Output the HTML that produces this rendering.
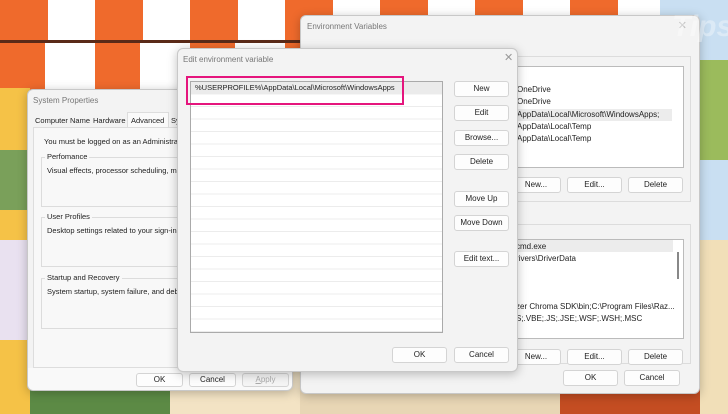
<!DOCTYPE html><html><head><style>
*{box-sizing:border-box;margin:0;padding:0}
body{width:728px;height:414px;overflow:hidden;position:relative;font-family:"Liberation Sans",sans-serif;font-size:8px;color:#222;background:#f2e4c8}
.a{position:absolute}
.win{position:absolute;background:#f3f3f3;border:1px solid #c8c8c8;border-radius:6px;box-shadow:0 2px 10px rgba(0,0,0,.25)}
.btn{position:absolute;background:#fdfdfd;border:1px solid #d4d4d4;border-radius:3px;text-align:center;font-size:8px;line-height:14px;color:#222}
.title{position:absolute;font-size:8px;color:#777}
.grp{position:absolute;border:1px solid #dcdcdc}
.gl{position:absolute;background:#f3f3f3;padding:0 2px;font-size:7.5px;top:-6px;left:3px}
</style></head><body>
<div class="a" style="left:0;top:0;width:728px;height:45px;background:repeating-linear-gradient(90deg,#ef6a2c 0 48px,#fff 48px 95px)"></div>
<div class="a" style="left:0;top:40px;width:728px;height:3px;background:#5a2a18"></div>
<div class="a" style="left:0;top:43px;width:330px;height:48px;background:repeating-linear-gradient(90deg,#ef6a2c 0 45px,#fff 45px 95px)"></div>
<div class="a" style="left:0;top:88px;width:30px;height:300px;background:#f5c247"></div>
<div class="a" style="left:0;top:150px;width:30px;height:60px;background:#7aa05a"></div>
<div class="a" style="left:0;top:240px;width:30px;height:100px;background:#e9e1f0"></div>
<div class="a" style="left:660px;top:0;width:68px;height:240px;background:#c9dff2"></div>
<div class="a" style="left:700px;top:60px;width:28px;height:100px;background:#9bbb5c"></div>
<div class="a" style="left:700px;top:240px;width:28px;height:174px;background:#f1dfb8"></div>
<div class="a" style="left:0;top:388px;width:728px;height:26px;background:linear-gradient(90deg,#f5c247 0 30px,#5c8a45 30px 170px,#f3e3c4 170px 300px,#e8d6b5 300px 560px,#c44d22 560px 700px,#f1dfb8 700px)"></div>
<!-- Environment Variables -->
<div class="win" style="left:300px;top:15px;width:400px;height:379px">
<div class="title" style="left:6px;top:6px">Environment Variables</div>
<div class="a" style="right:12px;top:3px;color:#bbb;font-size:11px">✕</div>
<div class="grp" style="left:205px;top:40px;width:185px;height:146px"></div>
<div class="a" style="left:212px;top:50px;width:171px;height:102px;background:#fff;border:1px solid #bbb"></div>
<div class="a" style="left:216px;top:68px;width:160px;line-height:12.3px;font-size:8px">OneDrive<br>OneDrive<br><span style="background:#ececec;display:block;width:155px">AppData\Local\Microsoft\WindowsApps;</span>AppData\Local\Temp<br>AppData\Local\Temp</div>
<div class="btn" style="left:210px;top:161px;width:50px;height:16px">New...</div>
<div class="btn" style="left:266px;top:161px;width:55px;height:16px">Edit...</div>
<div class="btn" style="left:327px;top:161px;width:55px;height:16px">Delete</div>
<div class="grp" style="left:205px;top:208px;width:185px;height:140px"></div>
<div class="a" style="left:212px;top:223px;width:171px;height:100px;background:#fff;border:1px solid #bbb"></div>
<div class="a" style="left:212px;top:224px;width:160px;height:12px;background:#ececec"></div>
<div class="a" style="left:376px;top:236px;width:2px;height:27px;background:#888"></div>
<div class="a" style="left:215px;top:225px;line-height:12px;font-size:8px">cmd.exe<br>rivers\DriverData<br><br><br><br>zer Chroma SDK\bin;C:\Program Files\Raz...<br>S;.VBE;.JS;.JSE;.WSF;.WSH;.MSC</div>
<div class="btn" style="left:210px;top:333px;width:50px;height:16px">New...</div>
<div class="btn" style="left:266px;top:333px;width:55px;height:16px">Edit...</div>
<div class="btn" style="left:327px;top:333px;width:55px;height:16px">Delete</div>
<div class="btn" style="left:262px;top:354px;width:55px;height:16px">OK</div>
<div class="btn" style="left:323px;top:354px;width:56px;height:16px">Cancel</div>
</div>
<!-- System Properties -->
<div class="win" style="left:27px;top:89px;width:266px;height:302px">
<div class="title" style="left:5px;top:6px">System Properties</div>
<div class="a" style="left:7px;top:26px;font-size:7.5px">Computer Name</div>
<div class="a" style="left:65px;top:26px;font-size:7.5px">Hardware</div>
<div class="a" style="left:99px;top:22px;width:42px;height:15px;background:#fafafa;border:1px solid #ddd;border-bottom:none;font-size:7.5px;padding:3px 3px">Advanced</div>
<div class="a" style="left:143px;top:26px;font-size:7.5px">Sy</div>
<div class="a" style="left:5px;top:37px;width:260px;height:241px;background:#f8f8f8;border:1px solid #ddd"></div>
<div class="a" style="left:16px;top:47px;font-size:7.5px">You must be logged on as an Administrator t</div>
<div class="grp" style="left:13px;top:67px;width:253px;height:50px"><span class="gl" style="background:#f8f8f8">Perfomance</span><div class="a" style="left:5px;top:8px;font-size:7.5px">Visual effects, processor scheduling, memo</div></div>
<div class="grp" style="left:13px;top:127px;width:253px;height:50px"><span class="gl" style="background:#f8f8f8">User Profiles</span><div class="a" style="left:5px;top:8px;font-size:7.5px">Desktop settings related to your sign-in</div></div>
<div class="grp" style="left:13px;top:188px;width:253px;height:51px"><span class="gl" style="background:#f8f8f8">Startup and Recovery</span><div class="a" style="left:5px;top:8px;font-size:7.5px">System startup, system failure, and debugg</div></div>
<div class="a" style="left:0;top:278px;width:264px;height:22px;background:#f9f9f9;border-radius:0 0 6px 6px"></div>
<div class="btn" style="left:108px;top:283px;width:47px;height:14px;line-height:12px">OK</div>
<div class="btn" style="left:161px;top:283px;width:47px;height:14px;line-height:12px">Cancel</div>
<div class="btn" style="left:214px;top:283px;width:47px;height:14px;line-height:12px;color:#aaa;background:#f4f4f4"><u>A</u>pply</div>
</div>
<!-- Edit environment variable -->
<div class="win" style="left:177px;top:48px;width:341px;height:324px">
<div class="title" style="left:5px;top:6px">Edit environment variable</div>
<div class="a" style="left:326px;top:2px;color:#999;font-size:11px">✕</div>
<div class="a" style="left:12px;top:32px;width:253px;height:252px;border:1px solid #aaa;background:repeating-linear-gradient(180deg,#fff 0 11.5px,#ececec 11.5px 12.5px)"></div>
<div class="a" style="left:13px;top:33px;width:251px;height:12px;background:#ebebeb"></div>
<div class="a" style="left:17px;top:34px;font-size:7.5px">%USERPROFILE%\AppData\Local\Microsoft\WindowsApps</div>
<div class="a" style="left:8px;top:27px;width:218px;height:29px;border:2.5px solid #e5157d"></div>
<div class="btn" style="left:276px;top:32px;width:55px;height:16px">New</div>
<div class="btn" style="left:276px;top:56px;width:55px;height:16px">Edit</div>
<div class="btn" style="left:276px;top:81px;width:55px;height:16px">Browse...</div>
<div class="btn" style="left:276px;top:105px;width:55px;height:16px">Delete</div>
<div class="btn" style="left:276px;top:142px;width:55px;height:16px">Move Up</div>
<div class="btn" style="left:276px;top:166px;width:55px;height:16px">Move Down</div>
<div class="btn" style="left:276px;top:202px;width:55px;height:16px">Edit text...</div>
<div class="btn" style="left:214px;top:298px;width:55px;height:16px">OK</div>
<div class="btn" style="left:276px;top:298px;width:55px;height:16px">Cancel</div>
</div>
<div class="a" style="left:672px;top:10px;font-size:30px;font-style:italic;font-weight:bold;color:rgba(255,255,255,.35)">Tips</div>
</body></html>
